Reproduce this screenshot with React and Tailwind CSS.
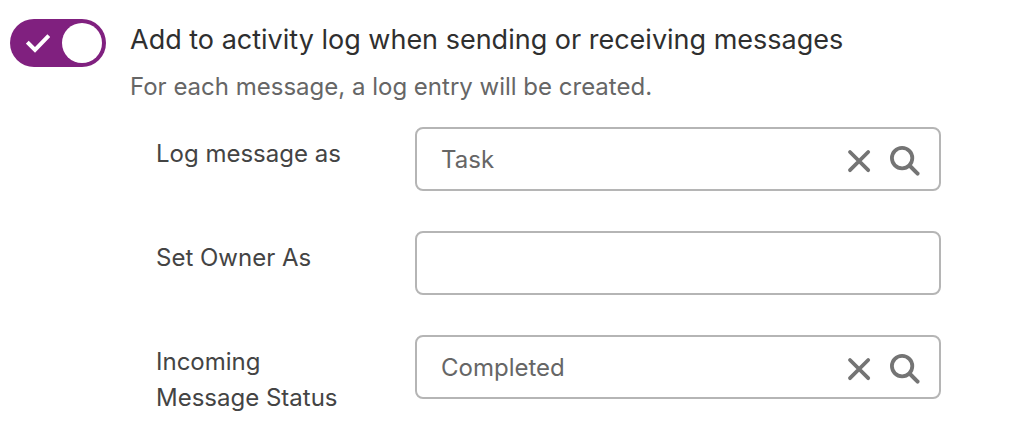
import React, { useState } from 'react';

const CloseIcon = () => (
  <svg width="24" height="24" viewBox="0 0 24 24" fill="none" stroke="currentColor" strokeWidth="3.8" strokeLinecap="round" aria-hidden="true">
    <path d="M3 3 21.2 21.2M21.2 3 3 21.2" />
  </svg>
);

const SearchIcon = () => (
  <svg width="32" height="32" viewBox="0 0 32 32" fill="none" stroke="currentColor" aria-hidden="true">
    <circle cx="13.1" cy="13.1" r="10.2" strokeWidth="3.8" />
    <path d="M20.5 20.5 28.6 28.6" strokeWidth="4" strokeLinecap="round" />
  </svg>
);

const LookupField = ({ id, label, value, onChange }) => (
  <div className="flex min-h-16 items-start">
    <label htmlFor={id} className="w-[259px] shrink-0 pt-[9px] pr-12 text-2xl leading-9 text-[#444444]">
      {label}
    </label>
    <div className="flex h-16 flex-1 items-center rounded-lg border-2 border-[#b5b5b5] bg-white pr-[18px] pl-6">
      <input
        id={id}
        type="text"
        value={value}
        onChange={(e) => onChange(e.target.value)}
        className="h-full min-w-0 flex-1 bg-transparent text-2xl text-[#666666] outline-none"
      />
      {value && (
        <div className="flex items-center gap-[18px] pt-1 text-[#747474]">
          <button type="button" aria-label={`Clear ${label}`} onClick={() => onChange('')}>
            <CloseIcon />
          </button>
          <button type="button" aria-label={`Search ${label}`}>
            <SearchIcon />
          </button>
        </div>
      )}
    </div>
  </div>
);

const App = () => {
  const [enabled, setEnabled] = useState(true);
  const [logAs, setLogAs] = useState('Task');
  const [owner, setOwner] = useState('');
  const [status, setStatus] = useState('Completed');

  return (
    <div className="min-h-screen bg-white pt-[19px] pr-[73px] pl-2.5 font-['Inter',sans-serif]">
      {/* Toggle and heading */}
      <div className="flex items-start gap-6">
        <button
          type="button"
          role="switch"
          aria-checked={enabled}
          aria-labelledby="log-title"
          onClick={() => setEnabled(!enabled)}
          className={`flex h-12 w-24 shrink-0 items-center justify-between rounded-full pr-1 pl-4 ${
            enabled ? 'bg-[#80207f]' : 'flex-row-reverse bg-gray-400'
          }`}
        >
          <svg width="24" height="20" viewBox="0 0 24 20" fill="none" stroke="white" strokeWidth="4" aria-hidden="true">
            <path d="M1.3 9.2 9 16.9 22.8 2.6" />
          </svg>
          <span className="h-10 w-10 rounded-full bg-white" />
        </button>
        <div>
          <h1 id="log-title" className="text-[27px] leading-[42px] text-[#2f2f2f]">
            Add to activity log when sending or receiving messages
          </h1>
          <p className="mt-2 text-2xl leading-9 text-[#666666]">
            For each message, a log entry will be created.
          </p>
        </div>
      </div>

      {/* Log settings */}
      <div className="mt-[22px] flex flex-col gap-10 pl-[146px]">
        <LookupField id="log-as" label="Log message as" value={logAs} onChange={setLogAs} />
        <LookupField id="owner" label="Set Owner As" value={owner} onChange={setOwner} />
        <LookupField id="status" label="Incoming Message Status" value={status} onChange={setStatus} />
      </div>
    </div>
  );
};

export default App;
